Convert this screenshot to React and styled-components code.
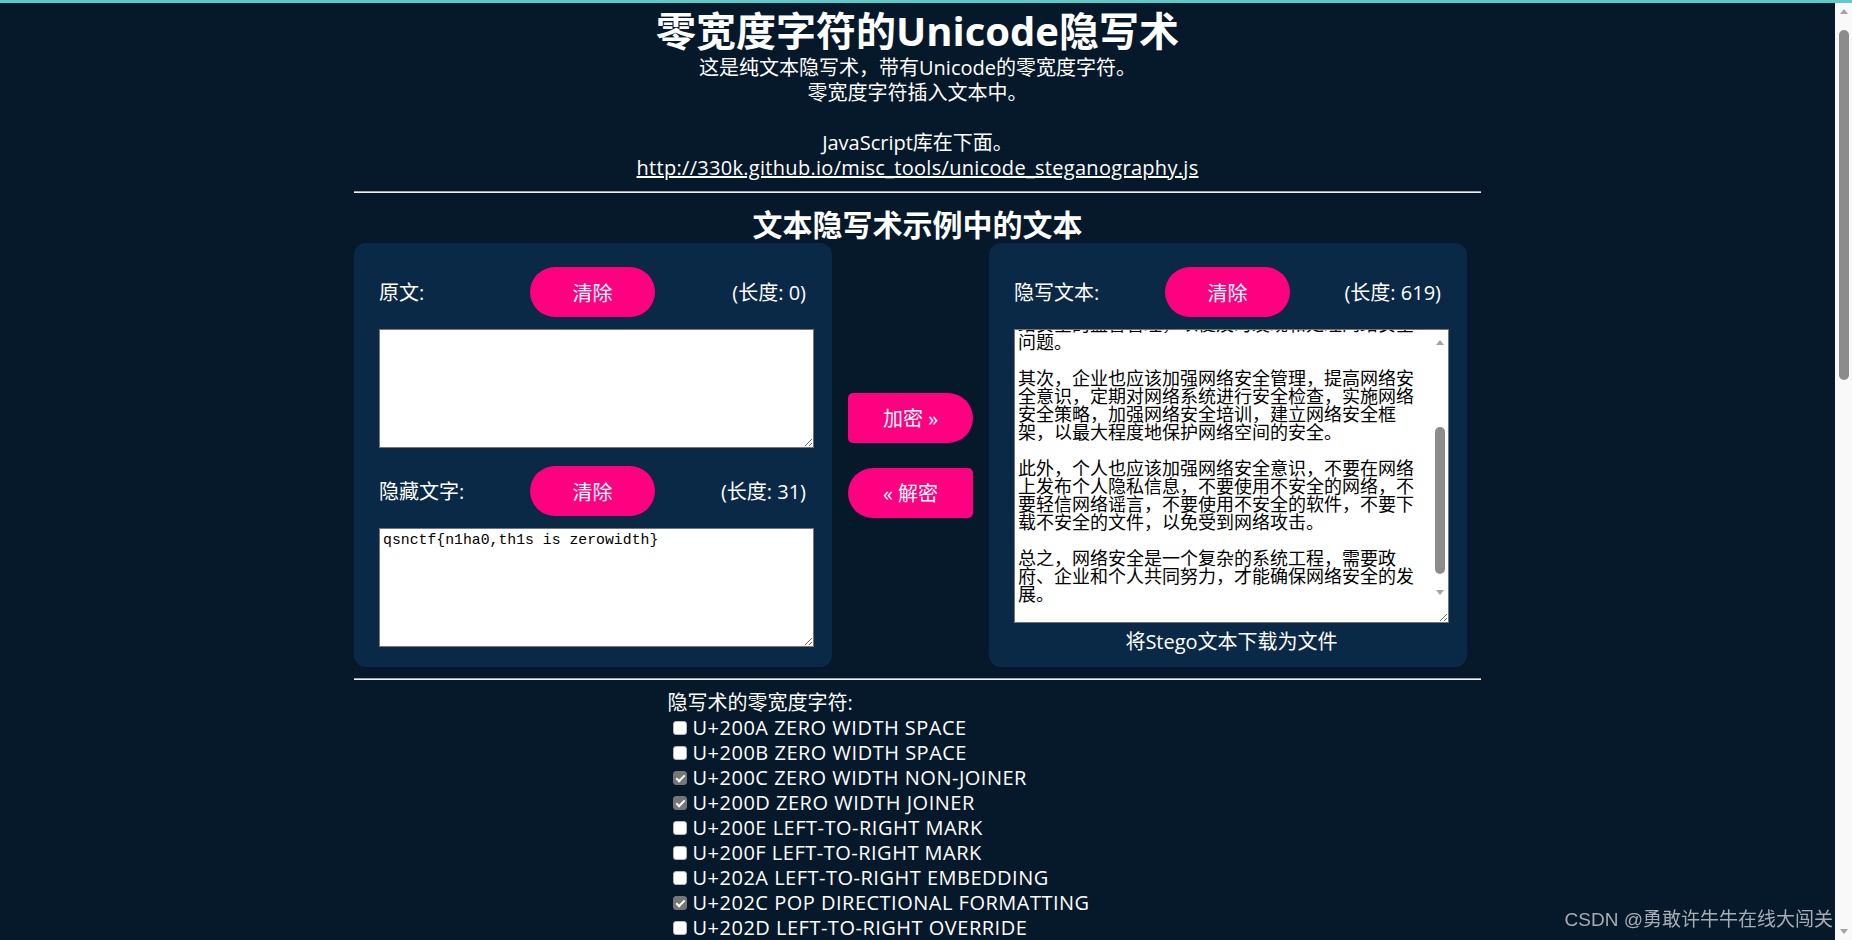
import React, { useEffect, useRef } from 'react'
import styled, { createGlobalStyle } from 'styled-components'

const STEGO_TEXT = `随着互联网的快速发展，网络安全问题日益突出，网络攻击、数据泄露、网络诈骗等事件频频发生，给个人、企业和国家都带来了严重的威胁。因此，加强网络安全建设显得尤为重要。

首先，政府应该加强网络安全的立法工作，完善相关法律法规，建立健全网络安全监管体系，加强网络安全的监督管理，以便及时发现和处理网络安全问题。

其次，企业也应该加强网络安全管理，提高网络安全意识，定期对网络系统进行安全检查，实施网络安全策略，加强网络安全培训，建立网络安全框架，以最大程度地保护网络空间的安全。

此外，个人也应该加强网络安全意识，不要在网络上发布个人隐私信息，不要使用不安全的网络，不要轻信网络谣言，不要使用不安全的软件，不要下载不安全的文件，以免受到网络攻击。

总之，网络安全是一个复杂的系统工程，需要政府、企业和个人共同努力，才能确保网络安全的发展。
`

const CHARS = [
  { code: 'U+200A', name: 'ZERO WIDTH SPACE', on: false },
  { code: 'U+200B', name: 'ZERO WIDTH SPACE', on: false },
  { code: 'U+200C', name: 'ZERO WIDTH NON-JOINER', on: true },
  { code: 'U+200D', name: 'ZERO WIDTH JOINER', on: true },
  { code: 'U+200E', name: 'LEFT-TO-RIGHT MARK', on: false },
  { code: 'U+200F', name: 'LEFT-TO-RIGHT MARK', on: false },
  { code: 'U+202A', name: 'LEFT-TO-RIGHT EMBEDDING', on: false },
  { code: 'U+202C', name: 'POP DIRECTIONAL FORMATTING', on: true },
  { code: 'U+202D', name: 'LEFT-TO-RIGHT OVERRIDE', on: false },
  { code: 'U+2062', name: 'INVISIBLE TIMES', on: false },
  { code: 'U+2063', name: 'INVISIBLE SEPARATOR', on: false },
  { code: 'U+FEFF', name: 'ZERO WIDTH NON-BREAKING SPACE', on: true },
]

const ScrollBar = ({ overlay, offset, size }) => (
  <Rail $overlay={overlay}>
    <Arrow />
    <Track>
      <Thumb $offset={offset} $size={size} />
    </Track>
    <Arrow $down />
  </Rail>
)

const App = () => {
  const stegoRef = useRef(null)

  useEffect(() => {
    const el = stegoRef.current
    if (el) el.scrollTop = el.scrollHeight
  }, [])

  return (
    <Frame>
      <GlobalStyle />
      <TopEdge />
      <Viewport>
        <Scroller>
          <Page>
            <Title>零宽度字符的Unicode隐写术</Title>
            <Intro>
              这是纯文本隐写术，带有Unicode的零宽度字符。<br />
              零宽度字符插入文本中。<br />
              <br />
              JavaScript库在下面。<br />
              <Link href='#'>http://330k.github.io/misc_tools/unicode_steganography.js</Link>
            </Intro>
            <Rule />

            <Heading>文本隐写术示例中的文本</Heading>
            <Workbench>
              <Panel>
                <FieldHead>
                  <FieldLabel>原文:</FieldLabel>
                  <Button $shape='pill'>清除</Button>
                  <Count>(长度: 0)</Count>
                </FieldHead>
                <TextBox $height={119} />
                <FieldHead $gap>
                  <FieldLabel>隐藏文字:</FieldLabel>
                  <Button $shape='pill'>清除</Button>
                  <Count>(长度: 31)</Count>
                </FieldHead>
                <TextBox $height={119} $mono defaultValue='qsnctf{n1ha0,th1s is zerowidth}' />
              </Panel>
              <Actions>
                <Button $shape='next'>加密 »</Button>
                <Button $shape='prev'>« 解密</Button>
              </Actions>
              <Panel>
                <FieldHead>
                  <FieldLabel>隐写文本:</FieldLabel>
                  <Button $shape='pill'>清除</Button>
                  <Count>(长度: 619)</Count>
                </FieldHead>
                <StegoBox>
                  <TextBox ref={stegoRef} $height={294} $scroll defaultValue={STEGO_TEXT} />
                  <ScrollBar overlay offset={76} size={147} />
                </StegoBox>
                <Download>将Stego文本下载为文件</Download>
              </Panel>
            </Workbench>
            <Rule />

            <Options>
              <OptionsTitle>隐写术的零宽度字符:</OptionsTitle>
              {CHARS.map((c) => (
                <Option key={c.code}>
                  <Check defaultChecked={c.on} />
                  {c.code} {c.name}
                </Option>
              ))}
            </Options>
            <Rule />

            <Heading>文本中的二进制隐写术示例</Heading>
            <Workbench>
              <Panel>
                <FieldHead>
                  <FieldLabel>原文:</FieldLabel>
                  <Button $shape='pill'>清除</Button>
                  <Count>(长度: 0)</Count>
                </FieldHead>
                <TextBox $height={119} />
                <FieldHead $gap>
                  <FieldLabel>隐藏文件:</FieldLabel>
                  <Button $shape='pill'>选择</Button>
                  <Count>(大小: 0)</Count>
                </FieldHead>
                <TextBox $height={119} />
              </Panel>
              <Actions>
                <Button $shape='next'>加密 »</Button>
                <Button $shape='prev'>« 解密</Button>
              </Actions>
              <Panel>
                <FieldHead>
                  <FieldLabel>隐写文本:</FieldLabel>
                  <Button $shape='pill'>清除</Button>
                  <Count>(长度: 0)</Count>
                </FieldHead>
                <TextBox $height={294} />
                <Download>下载隐藏文件</Download>
              </Panel>
            </Workbench>
          </Page>
        </Scroller>
        <ScrollBar offset={10} size={350} />
      </Viewport>
      <Watermark>CSDN @勇敢许牛牛在线大闯关</Watermark>
    </Frame>
  )
}

export default App

const GlobalStyle = createGlobalStyle`
  html, body {
    margin: 0;
    padding: 0;
    height: 100%;
    overflow: hidden;
  }
  body {
    background: #06192b;
    color: #fff;
    font-family: 'Open Sans', 'Noto Sans CJK SC', sans-serif;
  }
  #root {
    height: 100%;
  }
`

const Frame = styled.div`
  position: relative;
  height: 100vh;
  display: flex;
  flex-direction: column;
`
const TopEdge = styled.div`
  flex: 0 0 3px;
  background: #5ecbcb;
`
const Viewport = styled.div`
  flex: 1;
  min-height: 0;
  display: flex;
`
const Scroller = styled.div`
  flex: 1;
  overflow-y: auto;
  background: #06192b;
`
const Rail = styled.div`
  display: flex;
  flex-direction: column;
  flex: 0 0 17px;
  width: 17px;
  background: #f9f9f9;
  ${(p) =>
    p.$overlay &&
    `
    position: absolute;
    top: 5px;
    right: 1px;
    bottom: 22px;
    background: #fff;
  `}
`
const Arrow = styled.div`
  flex: 0 0 17px;
  display: flex;
  align-items: center;
  justify-content: center;

  &::before {
    content: '';
    border-left: 4.5px solid transparent;
    border-right: 4.5px solid transparent;
    ${(p) => (p.$down ? 'border-top: 5px solid #a3a3a3;' : 'border-bottom: 5px solid #a3a3a3;')}
  }
`
const Track = styled.div`
  flex: 1;
  padding-left: 4px;
`
const Thumb = styled.div`
  width: 10px;
  margin-top: ${(p) => p.$offset}px;
  height: ${(p) => p.$size}px;
  border-radius: 5px;
  background: #8c8c8c;
`
const Page = styled.div`
  box-sizing: border-box;
  width: 1127px;
  margin: 0 auto;
  padding: 4px 0 200px;
  text-align: center;
`
const Title = styled.h1`
  margin: 0;
  font-size: 40px;
  line-height: 48px;
  font-weight: 700;
`
const Intro = styled.div`
  font-size: 20px;
  line-height: 25px;
`
const Link = styled.a`
  color: #fff;
  text-decoration: underline;
  letter-spacing: 0.3px;
`
const Rule = styled.hr`
  margin: 11px 0 0;
  height: 0;
  border: none;
  border-top: 1px solid #a4a4a4;
  border-bottom: 1px solid #f0f0f0;
`
const Heading = styled.h2`
  margin: 14px 0 0;
  font-size: 30px;
  line-height: 36px;
  font-weight: 700;
`
const Workbench = styled.div`
  display: grid;
  grid-template-columns: 478px 157px 478px;
  text-align: left;
`
const Panel = styled.div`
  box-sizing: border-box;
  height: 424px;
  padding: 24px 18px 0 25px;
  background: #0a2947;
  border-radius: 12px;
  display: flex;
  flex-direction: column;
`
const FieldHead = styled.div`
  display: grid;
  grid-template-columns: 151px 125px 1fr;
  align-items: center;
  height: 50px;
  margin: ${(p) => (p.$gap ? '18px' : '0')} 0 12px;
`
const FieldLabel = styled.span`
  font-size: 20px;
  line-height: 25px;
`
const Count = styled.span`
  font-size: 20px;
  line-height: 25px;
  text-align: right;
  padding-right: 8px;
`
const radii = {
  pill: '25px',
  next: '5px 25px 25px 5px',
  prev: '25px 5px 5px 25px',
}
const Button = styled.button`
  width: 125px;
  height: 50px;
  padding: 0;
  border: none;
  border-radius: ${(p) => radii[p.$shape]};
  background: #ff0080;
  color: #fff;
  font-family: 'Open Sans', 'Noto Sans CJK SC', sans-serif;
  font-size: 20px;
  cursor: pointer;
`
const Actions = styled.div`
  display: flex;
  flex-direction: column;
  align-items: center;
  justify-content: center;
  gap: 25px;
`
const StegoBox = styled.div`
  position: relative;
  width: 435px;
`
const TextBox = styled.textarea`
  display: block;
  box-sizing: border-box;
  width: 435px;
  height: ${(p) => p.$height}px;
  margin: 0;
  padding: ${(p) => (p.$scroll ? '2px 20px 2px 3px' : '2px 3px')};
  border: 1px solid #767676;
  border-radius: 0;
  background: #fff;
  color: #000;
  font-family: ${(p) => (p.$mono ? "'Liberation Mono', monospace" : "'Noto Sans CJK SC', sans-serif")};
  font-size: ${(p) => (p.$mono ? '14.8px' : '18px')};
  font-weight: 400;
  line-height: 18px;
  outline: none;
`
const Download = styled.div`
  margin-top: 9px;
  font-size: 20px;
  line-height: 20px;
  text-align: center;
`
const Options = styled.div`
  width: 500px;
  margin: 10px auto 0;
  text-align: left;
  font-size: 20px;
  line-height: 25px;
`
const OptionsTitle = styled.div``
const Option = styled.label`
  display: flex;
  align-items: center;
  height: 25px;
  letter-spacing: 0.5px;
`
const Check = styled.input.attrs({ type: 'checkbox' })`
  appearance: none;
  position: relative;
  flex: 0 0 auto;
  box-sizing: border-box;
  width: 14px;
  height: 14px;
  margin: 0 6px 0 5px;
  border: 1px solid #b5b5b5;
  border-radius: 3px;
  background: #fff;

  &:checked {
    background: #767676;
    border-color: #767676;
  }
  &:checked::after {
    content: '';
    position: absolute;
    left: 4px;
    top: 1px;
    width: 3px;
    height: 7px;
    border: solid #fff;
    border-width: 0 2px 2px 0;
    transform: rotate(45deg);
  }
`
const Watermark = styled.div`
  position: absolute;
  right: 19px;
  bottom: 9px;
  font-family: 'Liberation Sans', 'Noto Sans CJK SC', sans-serif;
  font-size: 19px;
  line-height: 22px;
  color: #a7acb2;
  pointer-events: none;
`
